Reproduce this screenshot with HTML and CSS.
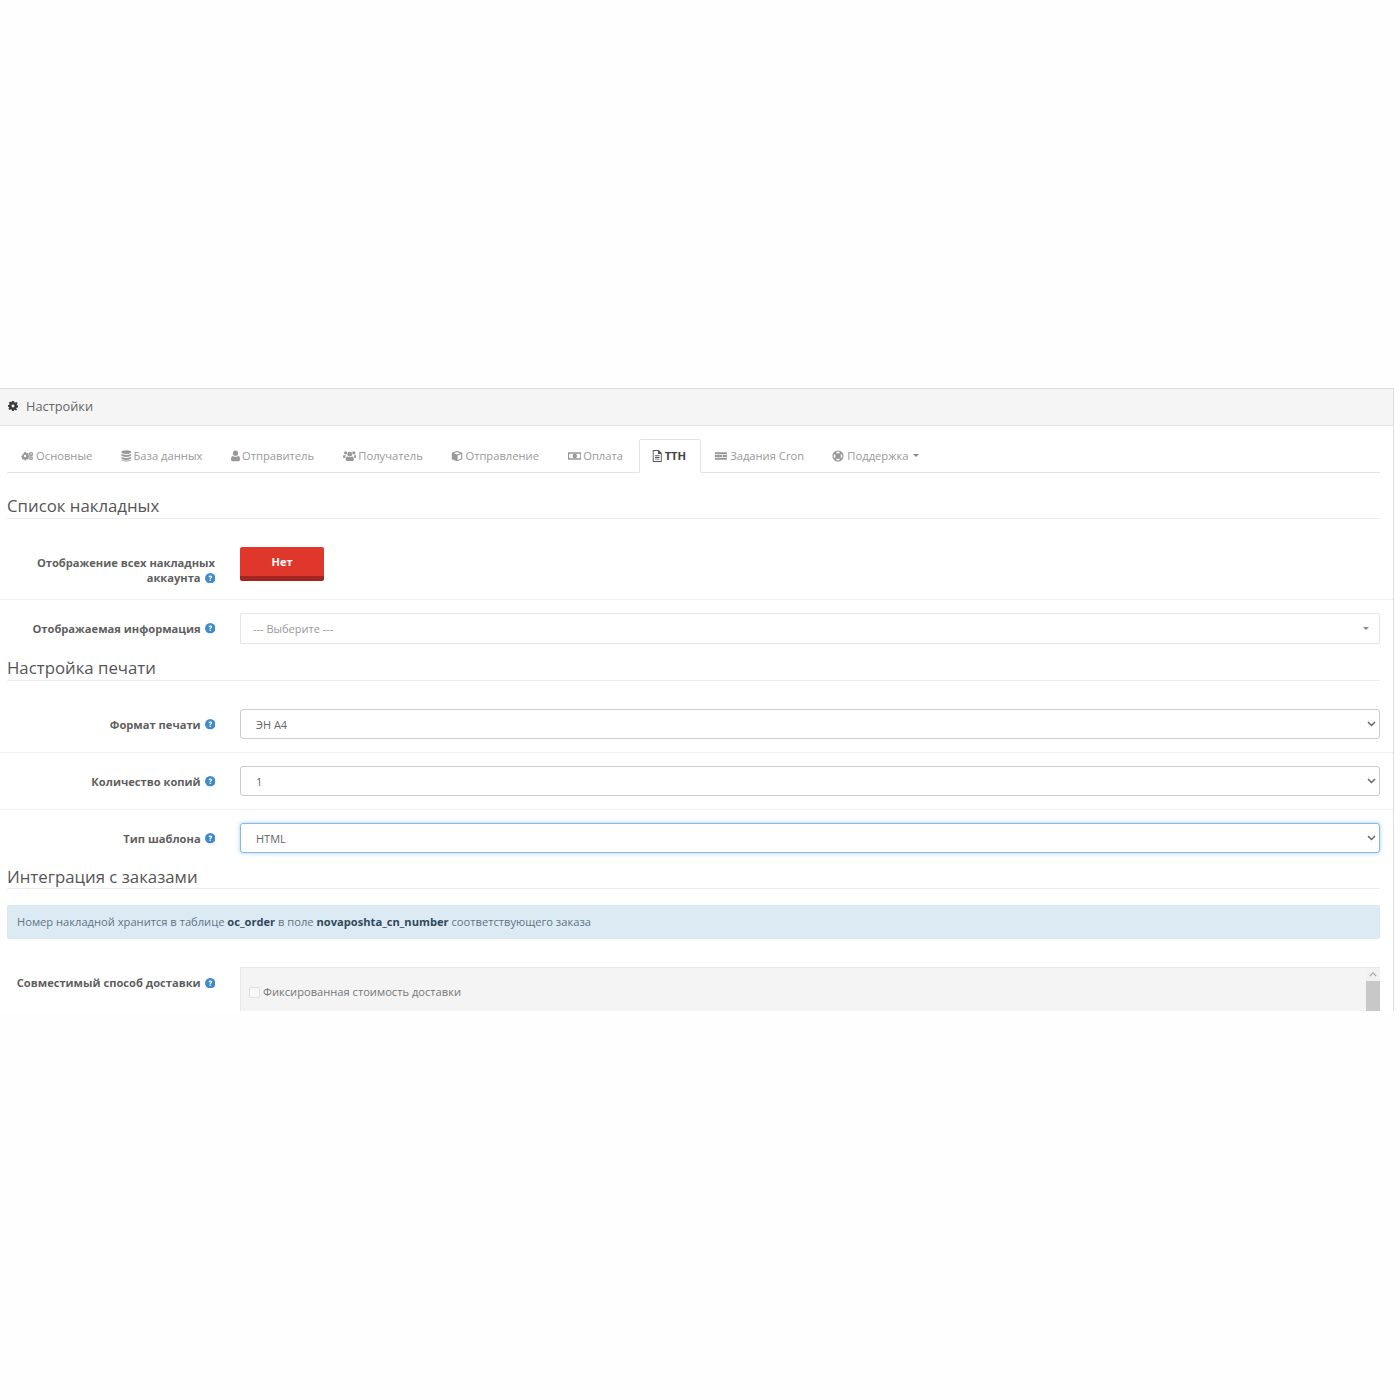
FILE: index.html
```html
<!DOCTYPE html>
<html lang="ru">
<head>
<meta charset="utf-8">
<title>Настройки</title>
<link rel="stylesheet" href="styles.css">
</head>
<body>
<main class="panel">
  <header class="panel-heading">
    <svg class="gear" viewBox="0 0 24 24"><path fill-rule="evenodd" d="M9.500 0h5l.7 3.600 1.700.7L20 2.200 23 5.500l-2 3 .6 1.600 2.400.5v4.800l-3.500.7-.7 1.600 2 3L19 23l-3-2-1.400.6-.6 2.400H9.500l-.7-3.500-1.600-.7-3 2L1 18.700l2-3-.7-1.600L0 13.500V9.500l3.300-.7.700-1.600-2-3L5 1.200l3 2 1-.4zM12 8.500a3.500 3.500 0 1 0 0 7 3.500 3.500 0 0 0 0-7z"/></svg>
    <span>Настройки</span>
  </header>
  <div class="panel-body">
    <nav class="tabs">
      <a class="tab"><svg class="ico" viewBox="0 -3 24 22"><path fill-rule="evenodd" d="M6 1h3l.5 2 1.800.7 1.900-1 2 2-1 1.900.6 1.500 2 .6v2.800l-2 .6-.6 1.500 1 1.900-2 2-1.900-1-1.800.7-.5 1.800H6l-.5-1.800-1.800-.7-1.900 1-2-2 1-1.900-.6-1.500-2-.6" transform="translate(1.500 0) scale(.85)"/><circle cx="18.500" cy="4.500" r="4"/><circle cx="18.500" cy="12" r="3.500"/><circle cx="7.500" cy="8" r="2.200" fill="#fff"/><circle cx="18.500" cy="4.500" r="1.400" fill="#fff"/><circle cx="18.500" cy="12" r="1.200" fill="#fff"/></svg>Основные</a>
      <a class="tab"><svg class="ico" viewBox="0 0 14 16"><ellipse cx="7" cy="2.800" rx="6.500" ry="2.500"/><path d="M.5 5c1 2 12 2 13 0v2.300c-1 2.500-12 2.500-13 0zM.5 9c1 2 12 2 13 0v2.300c-1 2.500-12 2.500-13 0zM.5 12.600c1 2 12 2 13 0v.8c-1 2.600-12 2.600-13 0z"/></svg>База данных</a>
      <a class="tab"><svg class="ico" viewBox="0 0 12 16"><circle cx="6" cy="4.300" r="3.500"/><path d="M2.500 8c2 1.500 5 1.500 7 0 1.800.3 2.500 2 2.500 4.500 0 1.500-1 2.500-2.300 2.500H2.300C1 15 0 14 0 12.500 0 10 .7 8.300 2.500 8z"/></svg>Отправитель</a>
      <a class="tab"><svg class="ico" viewBox="0 0 18 16"><circle cx="9" cy="5.500" r="3.200"/><circle cx="3.500" cy="3.800" r="2.200"/><circle cx="14.500" cy="3.800" r="2.200"/><path d="M5.500 8.500c2 1.200 5 1.200 7 0 1.500.4 2 2 2 4 0 1.300-.8 2-2 2h-7c-1.200 0-2-.7-2-2 0-2 .5-3.600 2-4zM1.500 6.800c.7.500 1.500.7 2.400.6-.5.900-1 2-1 3.100H1c-.7 0-1-.5-1-1.200 0-1.300.4-2.200 1.500-2.500zM16.500 6.800c-.7.500-1.500.7-2.400.6.500.9 1 2 1 3.100H17c.7 0 1-.5 1-1.200 0-1.300-.4-2.200-1.500-2.500z"/></svg>Получатель</a>
      <a class="tab"><svg class="ico" viewBox="0 0 16 16"><path fill-rule="evenodd" d="M8 1l7 2.800v8.400L8 15l-7-2.800V3.800zM8 2.600L3.600 4.300 8 6l4.400-1.700zM8.800 7.400v5.900l4.700-1.900V5.500z"/></svg>Отправление</a>
      <a class="tab"><svg class="ico" viewBox="0 -1 18 16"><path fill-rule="evenodd" d="M0 2h18v10H0zM2.500 4a1 1 0 0 1-1 1v4a1 1 0 0 1 1 1h13a1 1 0 0 1 1-1V5a1 1 0 0 1-1-1zM9 4a3 3 0 1 1 0 6 3 3 0 0 1 0-6z"/></svg>Оплата</a>
      <a class="tab active"><svg class="ico" viewBox="0 0 14 16"><path fill-rule="evenodd" d="M1 0h8l4 4v12H1zM2.200 1.200v13.600h9.600V5.200H8V1.200zM4 7h6v1.200H4zM4 9.300h6v1.200H4zM4 11.600h6v1.200H4z"/></svg>ТТН</a>
      <a class="tab wide-gap"><svg class="ico" viewBox="0 -2 18 18"><path d="M0 1.500h18v3H0zM0 5.500h11v3H0zM12 5.500h6v3h-6zM0 9.500h18v3H0z"/></svg>Задания Cron</a>
      <a class="tab wide-gap"><svg class="ico" viewBox="0 0 16 16"><path fill-rule="evenodd" d="M8 .5a7.500 7.500 0 1 1 0 15 7.500 7.500 0 0 1 0-15zM5.500 2.700l.8 2a4 4 0 0 1 3.400 0l.8-2a6 6 0 0 0-5 0zM2.700 5.500a6 6 0 0 0 0 5l2-.8a4 4 0 0 1 0-3.400zM13.300 5.500l-2 .8a4 4 0 0 1 0 3.400l2 .8a6 6 0 0 0 0-5zM6.300 11.300l-.8 2a6 6 0 0 0 5 0l-.8-2a4 4 0 0 1-3.400 0z"/></svg>Поддержка<i class="caret"></i></a>
    </nav>

    <h2 class="section first">Список накладных</h2>
    <div class="row row-switch">
      <label class="row-label">Отображение всех накладных аккаунта <svg class="help" viewBox="0 0 16 16"><use href="#q"/></svg></label>
      <div class="row-field"><button class="switch" type="button">Нет</button></div>
    </div>
    <div class="row row-plain">
      <label class="row-label">Отображаемая информация <svg class="help" viewBox="0 0 16 16"><use href="#q"/></svg></label>
      <div class="row-field">
        <div class="combo"><span>--- Выберите ---</span><i class="caret"></i></div>
      </div>
    </div>

    <h2 class="section second">Настройка печати</h2>
    <div class="row row-tall">
      <label class="row-label">Формат печати <svg class="help" viewBox="0 0 16 16"><use href="#q"/></svg></label>
      <div class="row-field"><select class="select"><option>ЭН А4</option></select></div>
    </div>
    <div class="row">
      <label class="row-label">Количество копий <svg class="help" viewBox="0 0 16 16"><use href="#q"/></svg></label>
      <div class="row-field"><select class="select"><option>1</option></select></div>
    </div>
    <div class="row row-plain">
      <label class="row-label">Тип шаблона <svg class="help" viewBox="0 0 16 16"><use href="#q"/></svg></label>
      <div class="row-field"><select class="select focused"><option>HTML</option></select></div>
    </div>

    <h2 class="section third">Интеграция с заказами</h2>
    <div class="alert">Номер накладной хранится в таблице <b>oc_order</b> в поле <b>novaposhta_cn_number</b> соответствующего заказа</div>
    <div class="row row-list">
      <label class="row-label">Совместимый способ доставки <svg class="help" viewBox="0 0 16 16"><use href="#q"/></svg></label>
      <div class="row-field">
        <div class="checklist">
          <label class="check"><input type="checkbox" disabled><span>Фиксированная стоимость доставки</span></label>
          <div class="scrollbar"><svg class="scroll-up" viewBox="0 0 10 6"><path d="M1 5l4-4 4 4" fill="none" stroke="#a8a8a8" stroke-width="1.600"/></svg><div class="thumb"></div></div>
        </div>
      </div>
    </div>
  </div>
</main>
<svg class="defs" width="0" height="0" aria-hidden="true"><defs><symbol id="q" viewBox="0 0 16 16"><circle cx="8" cy="8" r="8" fill="#428bca"/><path d="M5.300 6.200C5.500 4.600 6.600 3.800 8.100 3.800c1.600 0 2.700.9 2.700 2.200 0 1.100-.6 1.600-1.300 2.100-.6.400-.8.700-.8 1.300H7c0-1.100.3-1.700 1-2.200.6-.4.900-.7.900-1.100 0-.5-.4-.8-.9-.8-.6 0-1 .4-1.100 1zM7 10.200h1.800V12H7z" fill="#fff"/></symbol></defs></svg>
</body>
</html>
```
FILE: styles.css
```css
* { box-sizing: border-box; }
html, body { margin: 0; padding: 0; background: #fefefe; }
body { height: 1400px; padding-top: 388px; font-family: "Open Sans", "Liberation Sans", sans-serif; color: #666; overflow: hidden; }
.defs { position: absolute; }

.panel { width: 1394px; height: 623px; overflow: hidden; border-top: 1px solid #ddd; border-right: 1px solid #ddd; background: #fff; }
.panel-heading { display: flex; align-items: center; height: 37px; padding: 0 0 2px 8px; gap: 8px; background: #f5f5f5; border-bottom: 1px solid #e4e4e4; font-size: 12.800px; color: #666; }
.gear { width: 10px; height: 10px; fill: #3a3a3a; flex: none; }
.panel-body { padding: 13px 13px 0 7px; }

.tabs { display: flex; height: 34px; border-bottom: 1px solid #e3e3e3; }
.tab { display: flex; align-items: center; height: 34px; padding: 0 14.700px 1px 14px; font-size: 11.200px; color: #999; white-space: nowrap; }
.tab.active { margin: 0 .5px 0 1px; padding: 0 13.500px 1px 12px; background: #fff; border: 1px solid #e3e3e3; border-bottom: 1px solid #fff; border-radius: 2px 2px 0 0; color: #444; font-weight: 700; }
.ico { height: 12px; width: auto; fill: #999; margin-right: 2px; flex: none; }
.tab.active .ico { fill: #555; margin-right: 2.500px; }
.tab.wide-gap { padding-right: 14.300px; }
.tab.wide-gap .ico { margin-right: 3px; }
.caret { display: inline-block; width: 0; height: 0; margin-left: 5px; border-top: 3px solid #888; border-left: 3px solid transparent; border-right: 3px solid transparent; }

.section { margin: 0; padding-bottom: 2px; font-size: 16.800px; font-weight: 400; line-height: 21px; color: #555; border-bottom: 1px solid #ececec; }
.section.first { margin-top: 22px; }
.section.second { margin-top: 13px; }
.section.third { margin-top: 11px; padding-bottom: 1px; padding-top: 1px; }

.row { display: flex; height: 57px; margin: 0 -13px 0 -7px; padding-top: 13px; border-bottom: 1px solid #efefef; }
.row-switch { height: 81px; padding-top: 28px; }
.row-plain { height: 44px; border-bottom: 0; }
.row-tall { height: 72px; padding-top: 28px; }
.row-list { height: 80px; padding-top: 28px; border-bottom: 0; }
.row-label { flex: none; width: 215px; padding: 7.500px 0 0 14px; font-size: 11.150px; font-weight: 700; line-height: 15.500px; text-align: right; color: #5f5f5f; }
.row-list .row-label { padding-top: 8px; }
.row-field { flex: none; width: 1140px; margin-left: 25px; }
.help { width: 10.500px; height: 10.500px; vertical-align: -1px; margin-left: 1px; }

.switch { display: block; width: 84px; height: 34px; padding: 0; border: 0; border-bottom: 5px solid #a3251f; border-radius: 2px; background: #e0372c; color: #fff; font: 700 11px "Open Sans", sans-serif; }
.combo { display: flex; align-items: center; justify-content: space-between; height: 31px; padding: 0 10px 0 12px; border: 1px solid #e5e5e5; border-radius: 2px; font-size: 11px; color: #999; background: #fff; }
.select { display: block; width: 100%; height: 30px; padding: 1px 0 0 15px; border: 1px solid #ccc; border-radius: 3px; appearance: none; background: #fff url("data:image/svg+xml,%3Csvg xmlns='http://www.w3.org/2000/svg' width='9' height='6'%3E%3Cpath d='M1 1l3.500 3.500L8 1' fill='none' stroke='%23666' stroke-width='1.500'/%3E%3C/svg%3E") no-repeat right 3px center; font: 11px "Open Sans", sans-serif; color: #666; }
.select.focused { border-color: #8ab8e6; outline: 0; box-shadow: 0 0 4px rgba(102, 175, 233, .6); }

.alert { height: 34px; margin-top: 16px; padding: 0 9px; border: 1px solid #d6e9f2; border-radius: 2px; background: #dceaf4; font-size: 11.150px; line-height: 32px; color: #5f7484; }
.alert b { color: #31495a; font-weight: 700; }

.checklist { position: relative; height: 70px; padding: 16px 0 0 8px; border: 1px solid #e8e8e8; background: #f4f4f4; }
.check { display: flex; align-items: center; font-size: 11.150px; color: #777; line-height: 16px; }
.check input { appearance: none; width: 11px; height: 11px; margin: 0 3px 0 0; border: 1px solid #e0e0e0; border-radius: 2px; background: #f8f8f8; }
.scrollbar { position: absolute; top: 0; right: -1px; width: 14px; height: 100%; background: #f1f1f1; }
.scroll-up { display: block; width: 8px; height: 5px; margin: 4px auto 4px; }
.thumb { height: 60px; background: #c8c8c8; }
```
